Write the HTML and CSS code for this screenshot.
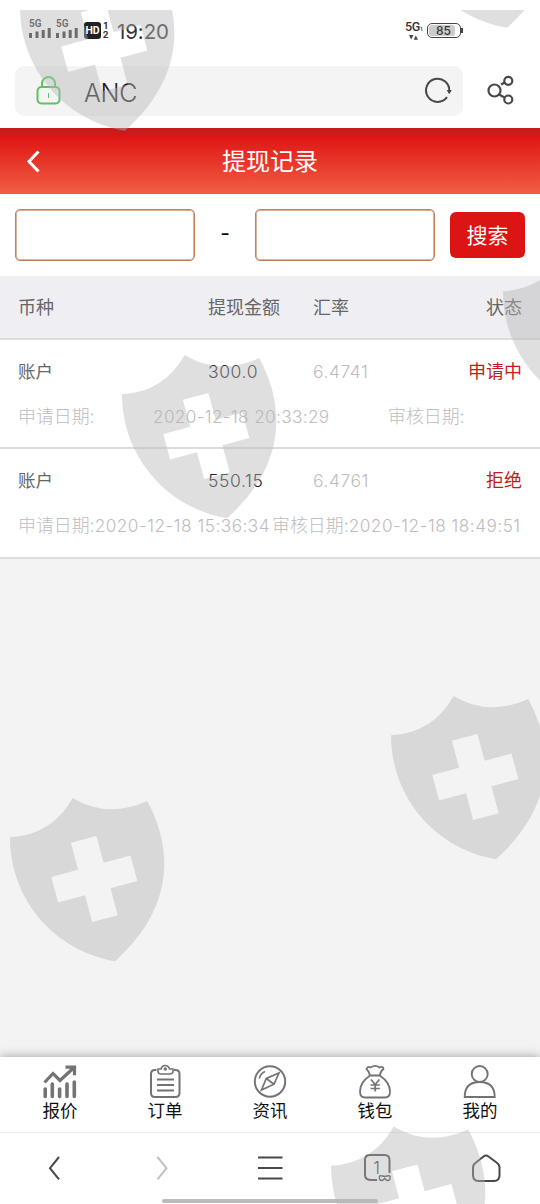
FILE: index.html
```html
<!DOCTYPE html>
<html lang="zh-CN">
<head>
<meta charset="utf-8">
<title>提现记录</title>
<link rel="stylesheet" href="styles.css">
</head>
<body>
<div class="phone">
  <header class="status">
    <div class="sim"><span>5G</span><svg width="22" height="10" viewBox="0 0 22 10"><path d="M1.500 5v5M8 3.500V10M14.200 2v8M20.200 0v10"/></svg></div>
    <div class="sim second"><span>5G</span><svg width="22" height="10" viewBox="0 0 22 10"><path d="M1.500 5v5M8 3.500V10M14.200 2v8M20.200 0v10"/></svg></div>
    <span class="hd">HD</span>
    <span class="lines"><i>1</i><i>2</i></span>
    <time class="clock">19:20</time>
    <div class="net"><span>5G<small>1</small></span><svg width="9" height="5" viewBox="0 0 9 5"><path d="M0 0h4.500L2.200 4.600zM4.700 4.800H9L6.800.4z"/></svg></div>
    <div class="battery"><span>85</span></div>
    <b class="tip"></b>
  </header>

  <div class="browser">
    <div class="address">
      <svg class="lock" width="26" height="30" viewBox="0 0 26 30"><rect x="1.500" y="11" width="22" height="16.500" rx="4"/><path d="M6 11V7.500a6.500 6.500 0 0 1 13 0V11"/><path class="key" d="M12.500 17v5"/></svg>
      <span>ANC</span>
      <svg class="reload" width="30" height="30" viewBox="0 0 30 30"><path d="M24 21.200A11.600 11.600 0 1 1 26.200 15.500"/><path class="head" d="M23.700 14h5.100l-2.600 4.300z"/></svg>
    </div>
    <svg class="share" width="30" height="32" viewBox="0 0 30 32"><circle cx="8.500" cy="16.500" r="6"/><circle cx="22.300" cy="6.800" r="4"/><circle cx="22.300" cy="25.500" r="4"/><path d="M15 10.500l4-2.300M13 20.500l6 3.200"/></svg>
  </div>

  <div class="titlebar">
    <svg width="18" height="26" viewBox="0 0 18 26"><path d="M14.500 3.500L5 13.500l9.500 10"/></svg>
    <h1>提现记录</h1>
  </div>

  <form class="search">
    <input type="text" aria-label="开始日期">
    <span>-</span>
    <input type="text" aria-label="结束日期">
    <button type="button">搜索</button>
  </form>

  <main class="records">
    <div class="cols thead"><span>币种</span><span>提现金额</span><span>汇率</span><span>状态</span></div>
    <article class="record">
      <div class="cols"><span>账户</span><span class="amount">300.0</span><span class="rate">6.4741</span><span class="state">申请中</span></div>
      <div class="dates pending"><span>申请日期:</span><span class="when">2020-12-18 20:33:29</span><span>审核日期:</span></div>
    </article>
    <article class="record">
      <div class="cols"><span>账户</span><span class="amount">550.15</span><span class="rate">6.4761</span><span class="state">拒绝</span></div>
      <div class="dates"><span>申请日期:</span><span class="when">2020-12-18 15:36:34</span><span>审核日期:</span><span class="when">2020-12-18 18:49:51</span></div>
    </article>
  </main>

  <nav class="tabs">
    <a><svg width="36" height="36" viewBox="0 0 36 36"><path stroke-width="3.200" d="M2.500 18.500L11 9.500l7 7L31.500 4M23.500 3.200h9v8"/><path stroke-width="3.600" stroke-linecap="round" d="M3.200 25v7.500M10.300 20v12.500M17.600 25v7.500M25 20v12.500M32.300 18v14.500"/></svg>报价</a>
    <a><svg width="36" height="36" viewBox="0 0 36 36"><path stroke-width="2" d="M9.500 6H8Q4 6 4 10v19q0 4 4 4h20.500q4 0 4-4V10q0-4-4-4H27"/><path stroke-width="1.600" d="M11 5h3q1-3.500 4.200-3.500T22.500 5H26v2q0 3-3 3h-9q-3 0-3-3z"/><path stroke-width="2" d="M10 15.500h17M10 21h17M10 26.500h17"/><circle cx="18.300" cy="5" r=".8"/></svg>订单</a>
    <a><svg width="36" height="36" viewBox="0 0 36 36"><circle cx="18" cy="17.500" r="15.200" stroke-width="2"/><path stroke-width="1.700" d="M27 9l-5 11.200L9.500 26l4.800-11.500zM14.300 14.500l7.700 5.700M7.300 14.500q1.200-5 5.700-7"/></svg>资讯</a>
    <a><svg width="36" height="36" viewBox="0 0 36 36"><path stroke-width="1.800" d="M13 11.500Q12 7 9.500 5q1-3 4-1.600 4.500-3.200 9 0 4-1.400 4 1.600-3 2-3.700 6.500zM13 11.500Q3 18.500 3 27.500q0 6 5 6h20q5 0 5-6 0-9-10.200-16"/><path stroke-width="1.700" d="M14 15.500l4.200 5 4.200-5M18.200 20.500v7M13.600 21h9.200M13.600 24.500h9.200"/></svg>钱包</a>
    <a><svg width="36" height="36" viewBox="0 0 36 36"><circle cx="17.700" cy="10" r="8" stroke-width="1.900"/><path stroke-width="1.900" d="M2.700 33q0-15 15-15t15 15z"/></svg>我的</a>
  </nav>

  <footer class="toolbar">
    <svg width="40" height="40" viewBox="0 0 40 40"><path d="M24 9l-9 11.200 9 11.200"/></svg>
    <svg class="disabled" width="40" height="40" viewBox="0 0 40 40"><path d="M14.500 9l9 11.200-9 11.200"/></svg>
    <svg width="40" height="40" viewBox="0 0 40 40"><path d="M7 9.500h24.500M7 20h24.500M7 30.500h24.500"/></svg>
    <div class="windows"><svg width="40" height="40" viewBox="0 0 40 40"><path d="M19 32h-5.500q-6.500 0-6.500-5V12Q7 7 12 7h14.500q5 0 5 5v13"/><path stroke-width="1.400" d="M21.500 28.500q0-1.500 5.200 0 5.300-1.500 5.300 0 1 4-3 4l-2.300-2-2.300 2q-4 0-2.900-4z"/></svg><span>1</span></div>
    <svg width="40" height="40" viewBox="0 0 40 40"><path d="M17.500 8.500q2.500-1.800 5 0l8 6q3 2 3 5V27q0 6-5.500 6H12.500Q7 33 7 27v-7.500q0-3 3-5z"/></svg>
  </footer>
  <div class="handle"></div>

  <svg class="watermark" width="540" height="1194" viewBox="0 10 540 1194">
    <defs>
      <path id="shield" fill-rule="evenodd" d="M0 39.300Q42 37 62.700 0 97 21 137.300 3C165 55 162 112 105 163.300 45 153 0 102 0 39.300zM127.300 83.100L120.500 57.600 93.600 64.800 86.400 38 60.900 44.800 68.100 71.700 41.300 78.900 48.100 104.400 75 97.200 82.200 124 107.700 117.200 100.500 90.300z"/>
    </defs>
    <use href="#shield" x="20" y="-32.500"/>
    <use href="#shield" x="402" y="-135.500"/>
    <use href="#shield" x="503" y="252"/>
    <use href="#shield" x="122" y="355"/>
    <use href="#shield" x="391" y="696"/>
    <use href="#shield" x="10" y="798"/>
    <use href="#shield" x="331" y="1126.500"/>
  </svg>
</div>
</body>
</html>
```
FILE: styles.css
```css
* { box-sizing: border-box; }
body { margin: 0; font-family: Inter, "Noto Sans CJK SC", sans-serif; background: #fff; }
svg { display: block; fill: none; stroke: #484848; stroke-width: 2; flex: none; }
.phone { position: relative; width: 540px; height: 1204px; overflow: hidden; display: flex; flex-direction: column; background: #fff; }

.status { height: 66px; padding: 19px 0 0 29px; display: flex; align-items: flex-start; color: #333; flex: none; }
.sim { width: 22px; margin-right: 5px; }
.sim span { display: block; font: 600 10px/9px Roboto, sans-serif; }
.sim.second { margin-right: 6px; }
.sim svg { stroke-width: 3; stroke: #333; margin-top: 0; }
.hd { width: 17px; height: 17px; margin-top: 3px; border-radius: 3px; background: #222; color: #fff; font: 700 10.500px/17px Roboto, sans-serif; text-align: center; }
.lines { margin: 2px 0 0 1px; width: 7px; font-size: 9px; line-height: 9px; font-weight: 700; }
.lines i { display: block; font-style: normal; text-align: center; }
.clock { margin: 0 0 0 8px; width: 54px; font-size: 20.500px; line-height: 25px; letter-spacing: -.1px; }
.net { margin: 3px 0 0 234px; width: 19px; }
.net span { display: block; font: 500 12.500px/10px Roboto, sans-serif; white-space: nowrap; letter-spacing: -.4px; }
.net small { font-size: 6px; }
.net svg { margin: 1px 0 0 4px; fill: #444; stroke: none; }
.battery { margin: 4px 0 0 3px; width: 34px; height: 15px; border: 1.500px solid #444; border-radius: 5px; padding: 1px 5px 1px 1px; }
.battery span { display: block; height: 11px; border-radius: 3px; background: #ccc; font-size: 12px; line-height: 11px; padding-left: 7px; font-weight: 500; }
.tip { width: 2px; height: 5px; margin-top: 9px; background: #444; }

.browser { height: 62px; padding-left: 15px; display: flex; flex: none; }
.address { width: 448px; height: 50px; border-radius: 9px; background: #f4f4f4; padding-left: 21px; display: flex; align-items: center; color: #222; font-size: 25px; font-weight: 300; }
.address span { margin: 4px 0 0 22px; width: 337px; line-height: 30px; letter-spacing: -.3px; }
.lock { stroke: #5cc45e; margin-top: -1px; }
.lock .key { stroke-width: 1; }
.address .reload { margin-left: 2px; }
.reload .head { fill: #444; stroke: none; }
.share { margin: 8px 0 0 23px; stroke-width: 2.200; }

.titlebar { height: 66px; padding-left: 24px; display: flex; align-items: center; background: linear-gradient(#c71c1e 0, #c71c1e 5px, #df1514 8px, #f15f44 100%); flex: none; }
.titlebar svg { stroke: #fff; stroke-width: 3; }
.titlebar h1 { margin: 2px 0 0 180px; color: #fff; font-size: 24px; line-height: 34px; font-weight: 400; }

.search { height: 82px; padding: 15px 15px 0; display: flex; flex: none; }
.search input { width: 180px; height: 52px; border: 1px solid #c08058; box-shadow: inset 0 0 0 1px #dcb49a; border-radius: 5px; background: #fff; padding: 0 10px; outline: 0; }
.search span { width: 60px; text-align: center; line-height: 50px; font-size: 21px; }
.search button { margin: 3px 0 0 15px; width: 75px; height: 46px; border: 0; border-radius: 6px; background: #dc1414; color: #fff; font: 21px "Noto Sans CJK SC", sans-serif; padding: 0 0 2px; }

.records { flex: 1; background: #f3f3f3; font-size: 17.500px; }
.cols { display: grid; grid-template-columns: 190px 105px 104px 1fr; padding: 0 18px; color: #666; line-height: 26px; }
.cols :last-child { text-align: right; }
.thead { height: 64px; padding-top: 1px; background: #eeeef3; border-bottom: 2px solid #ddd; align-items: center; font-size: 18px; }
.record { height: 109px; padding-top: 19px; background: #fff; border-bottom: 2px solid #ddd; }
.record + .record { height: 110px; }
.cols .amount { color: #222; font-weight: 300; letter-spacing: .6px; }
.cols .rate { color: #bdbdbd; font-weight: 300; letter-spacing: .5px; }
.cols .state { color: #c31c20; font-size: 18px; margin-left: -20px; }
.dates { display: flex; padding: 0 18px; margin-top: 19px; line-height: 26px; color: #bdbdbd; font-weight: 300; white-space: nowrap; font-size: 17.900px; }
.dates span { width: 78px; }
.dates .when { width: 177px; font-size: 17.200px; letter-spacing: .5px; }
.dates .when + span { margin-left: 2px; }
.dates.pending .when { margin: 0 56px 0 57px; letter-spacing: .35px; }

.tabs { height: 76px; padding: 7px 7.500px 0; display: flex; background: #fff; box-shadow: 0 -1px 9px #aaa; clip-path: inset(-16px 0 0 0); border-bottom: 1px solid #eaeaea; flex: none; position: relative; }
.tabs a { width: 105px; display: flex; flex-direction: column; align-items: center; color: #111; font-size: 17.500px; line-height: 22px; }
.tabs svg { stroke: #737373; }

.toolbar { height: 66px; padding: 15px 34px 0 35px; display: flex; justify-content: space-between; flex: none; }
.toolbar .disabled { stroke: #c0c0c0; }
.windows { display: grid; width: 40px; height: 40px; }
.windows svg, .windows span { grid-area: 1 / 1; }
.windows span { font-size: 17px; line-height: 40px; padding-left: 15px; color: #333; font-weight: 300; }
.handle { width: 216px; height: 4px; margin: 0 auto 1px; border-radius: 2px; background: #bbb; flex: none; }
.watermark { position: absolute; left: 0; top: 10px; fill: rgba(182, 182, 182, .44); stroke: none; pointer-events: none; }
```
